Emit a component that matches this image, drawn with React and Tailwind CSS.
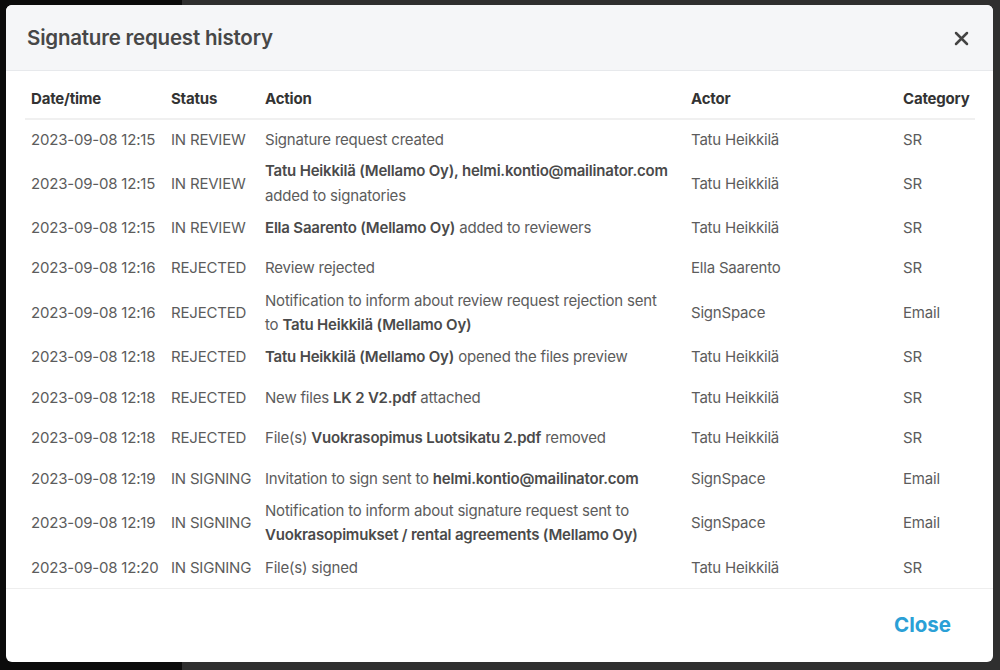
import React from "react";

const rows = [
    { time: "2023-09-08 12:15", status: "IN REVIEW", action: <>Signature request created</>, actor: "Tatu Heikkilä", category: "SR" },
    {
        time: "2023-09-08 12:15",
        status: "IN REVIEW",
        action: (
            <>
                <b>Tatu Heikkilä (Mellamo Oy), helmi.kontio@mailinator.com</b>
                <br />
                added to signatories
            </>
        ),
        actor: "Tatu Heikkilä",
        category: "SR",
    },
    { time: "2023-09-08 12:15", status: "IN REVIEW", action: <><b>Ella Saarento (Mellamo Oy)</b> added to reviewers</>, actor: "Tatu Heikkilä", category: "SR" },
    { time: "2023-09-08 12:16", status: "REJECTED", action: <>Review rejected</>, actor: "Ella Saarento", category: "SR" },
    {
        time: "2023-09-08 12:16",
        status: "REJECTED",
        action: (
            <>
                Notification to inform about review request rejection sent
                <br />
                to <b>Tatu Heikkilä (Mellamo Oy)</b>
            </>
        ),
        actor: "SignSpace",
        category: "Email",
    },
    { time: "2023-09-08 12:18", status: "REJECTED", action: <><b>Tatu Heikkilä (Mellamo Oy)</b> opened the files preview</>, actor: "Tatu Heikkilä", category: "SR" },
    { time: "2023-09-08 12:18", status: "REJECTED", action: <>New files <b>LK 2 V2.pdf</b> attached</>, actor: "Tatu Heikkilä", category: "SR" },
    { time: "2023-09-08 12:18", status: "REJECTED", action: <>File(s) <b>Vuokrasopimus Luotsikatu 2.pdf</b> removed</>, actor: "Tatu Heikkilä", category: "SR" },
    { time: "2023-09-08 12:19", status: "IN SIGNING", action: <>Invitation to sign sent to <b>helmi.kontio@mailinator.com</b></>, actor: "SignSpace", category: "Email" },
    {
        time: "2023-09-08 12:19",
        status: "IN SIGNING",
        action: (
            <>
                Notification to inform about signature request sent to
                <br />
                <b>Vuokrasopimukset / rental agreements (Mellamo Oy)</b>
            </>
        ),
        actor: "SignSpace",
        category: "Email",
    },
    { time: "2023-09-08 12:20", status: "IN SIGNING", action: <>File(s) signed</>, actor: "Tatu Heikkilä", category: "SR" },
];

const font = { fontFamily: "Inter, 'Noto Sans', sans-serif" };

const App = () => {
    return (
        <div className="relative flex h-[670px] w-[1000px] overflow-hidden" style={font}>
            <div className="w-[182px] bg-[#0b0b0b]"></div>
            <div className="flex-1 bg-[#2f2f2f]"></div>

            {/* modal */}
            <div className="absolute left-[6px] top-[5px] flex h-[657px] w-[987px] flex-col overflow-hidden rounded-md bg-white">
                <div className="flex h-[66px] items-center justify-between border-b border-[#e7e9ec] bg-[#f5f6f8] pl-[21px] pr-[20px] pt-[2px]">
                    <h2 className="text-[20.5px] font-semibold text-[#474747] tracking-[-0.2px]">Signature request history</h2>
                    <button className="flex h-[24px] w-[24px] items-center justify-center">
                        <svg width="15" height="15" viewBox="0 0 15 15">
                            <path d="M2 2 L13 13 M13 2 L2 13" stroke="#444" strokeWidth="2.5" strokeLinecap="round" />
                        </svg>
                    </button>
                </div>

                <div className="flex-1 px-[19px] pt-[10px]">
                    <table className="w-[950px] table-fixed border-collapse text-left text-[15px] tracking-[-0.2px]">
                        <colgroup>
                            <col className="w-[140px]" />
                            <col className="w-[94px]" />
                            <col className="w-[426px]" />
                            <col className="w-[212px]" />
                            <col className="w-[78px]" />
                        </colgroup>
                        <thead>
                            <tr className="h-[38px] border-b-2 border-[#f0f0f0] text-[#333]">
                                <th className="px-[6px] font-bold">Date/time</th>
                                <th className="px-[6px] font-bold">Status</th>
                                <th className="px-[6px] font-bold">Action</th>
                                <th className="px-[6px] font-bold">Actor</th>
                                <th className="px-[6px] font-bold">Category</th>
                            </tr>
                        </thead>
                        <tbody className="text-[#5c5c5c]">
                            {rows.map((r, i) => (
                                <tr key={i} className="h-[40.4px] leading-[24.3px]">
                                    <td className="whitespace-nowrap px-[6px]">{r.time}</td>
                                    <td className="whitespace-nowrap px-[6px]">{r.status}</td>
                                    <td className="whitespace-nowrap px-[6px] [&_b]:font-semibold [&_b]:text-[#4a4a4a]">{r.action}</td>
                                    <td className="px-[6px]">{r.actor}</td>
                                    <td className="px-[6px]">{r.category}</td>
                                </tr>
                            ))}
                        </tbody>
                    </table>
                </div>

                <div className="flex h-[74px] items-center justify-end border-t border-[#eeeeee] pr-[42px]">
                    <button className="text-[20.5px] font-bold text-[#2ba0d6]">Close</button>
                </div>
            </div>
        </div>
    );
};

export default App;
